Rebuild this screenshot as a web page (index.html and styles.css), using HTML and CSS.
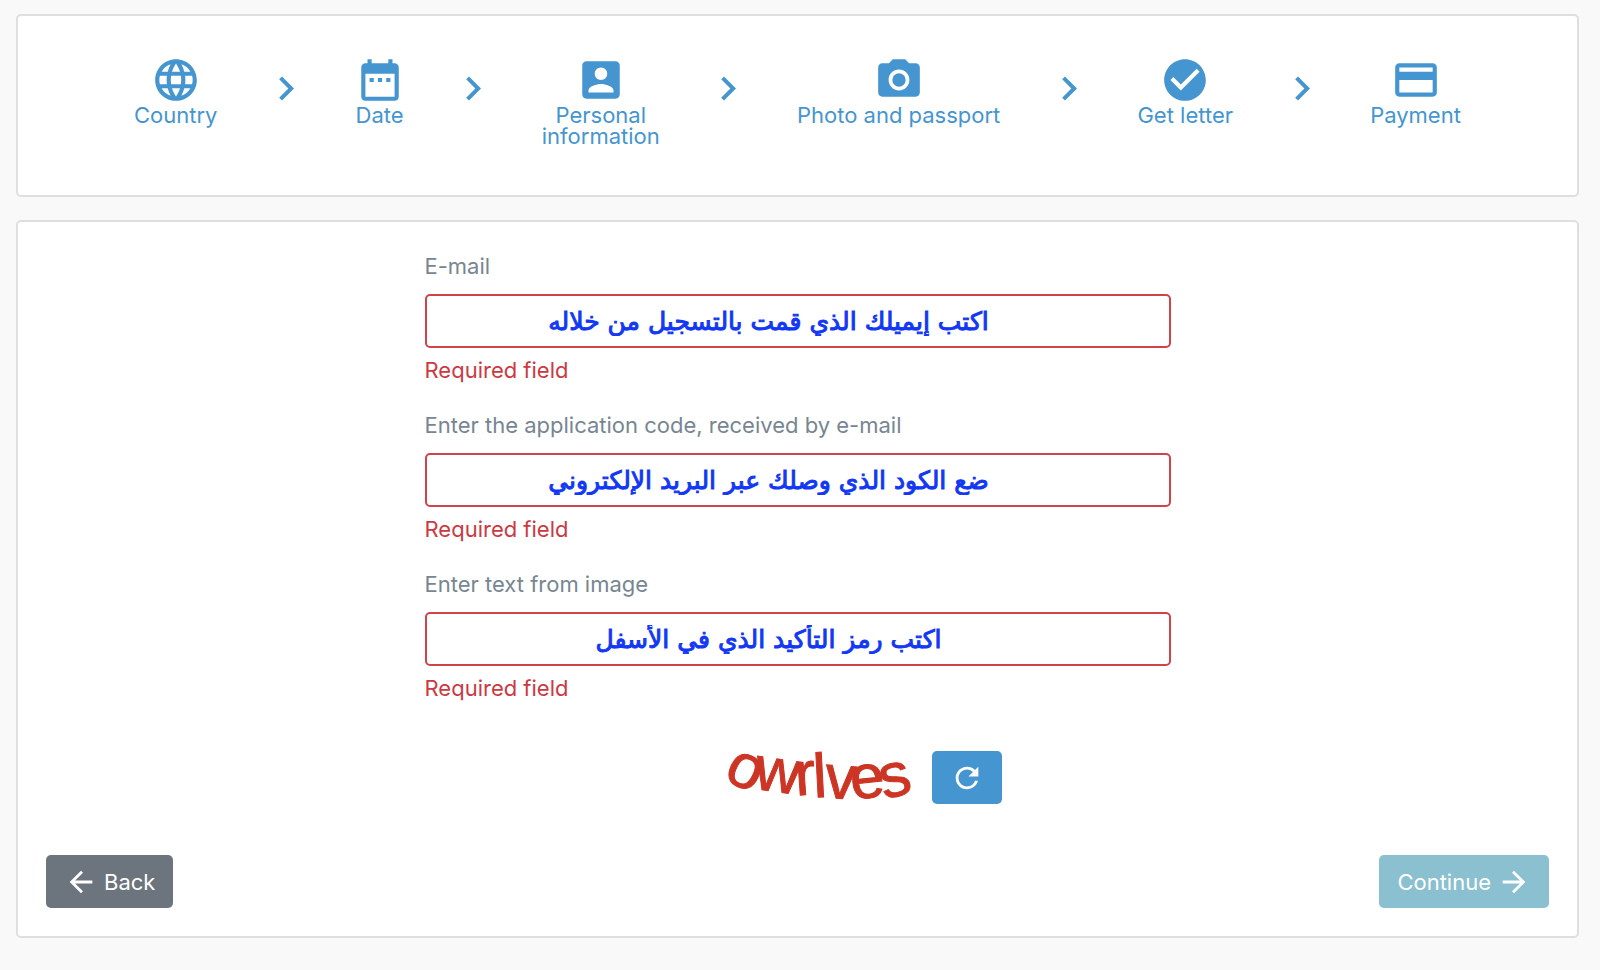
FILE: index.html
```
<!DOCTYPE html>
<html lang="en">
<head>
    <meta charset="utf-8">
    <title>Application</title>
    <link rel="stylesheet" href="styles.css">
</head>
<body>
    <ol class="card steps">
        <li class="step">
            <svg class="step-icon" viewBox="0 0 24 24"><path d="M11.99 2C6.47 2 2 6.48 2 12s4.47 10 9.99 10C17.52 22 22 17.52 22 12S17.52 2 11.99 2zm6.93 6h-2.95a15.65 15.65 0 0 0-1.38-3.56A8.03 8.03 0 0 1 18.92 8zM12 4.04c.83 1.2 1.48 2.53 1.91 3.96h-3.82c.43-1.43 1.08-2.76 1.91-3.96zM4.26 14C4.1 13.36 4 12.69 4 12s.1-1.36.26-2h3.38c-.08.66-.14 1.32-.14 2s.06 1.34.14 2H4.26zm.82 2h2.95c.32 1.25.78 2.45 1.38 3.56A7.99 7.99 0 0 1 5.08 16zm2.95-8H5.08a7.99 7.99 0 0 1 4.33-3.56A15.65 15.65 0 0 0 8.03 8zM12 19.96c-.83-1.2-1.48-2.53-1.91-3.96h3.82c-.43 1.43-1.08 2.76-1.91 3.96zM14.34 14H9.66c-.09-.66-.16-1.32-.16-2s.07-1.35.16-2h4.68c.09.65.16 1.32.16 2s-.07 1.34-.16 2zm.25 5.56c.6-1.11 1.06-2.31 1.38-3.56h2.95a8.03 8.03 0 0 1-4.33 3.56zM16.36 14c.08-.66.14-1.32.14-2s-.06-1.34-.14-2h3.38c.16.64.26 1.31.26 2s-.1 1.36-.26 2h-3.38z"/></svg>
            <span>Country</span>
        </li>
        <li class="chevron"><svg viewBox="8 6 8 12"><path d="M8.59 16.59L13.17 12 8.59 7.41 10 6l6 6-6 6-1.41-1.41z"/></svg></li>
        <li class="step">
            <svg class="step-icon" viewBox="0 0 24 24"><path d="M9 11H7v2h2v-2zm4 0h-2v2h2v-2zm4 0h-2v2h2v-2zm2-7h-1V2h-2v2H8V2H6v2H5c-1.11 0-1.99.9-1.99 2L3 20c0 1.1.89 2 2 2h14c1.1 0 2-.9 2-2V6c0-1.1-.9-2-2-2zm0 16H5V9h14v11z"/></svg>
            <span>Date</span>
        </li>
        <li class="chevron"><svg viewBox="8 6 8 12"><path d="M8.59 16.59L13.17 12 8.59 7.41 10 6l6 6-6 6-1.41-1.41z"/></svg></li>
        <li class="step">
            <svg class="step-icon" viewBox="0 0 24 24"><path d="M3 5v14c0 1.1.89 2 2 2h14c1.1 0 2-.9 2-2V5c0-1.1-.9-2-2-2H5c-1.11 0-2 .9-2 2zm12 4c0 1.66-1.34 3-3 3s-3-1.34-3-3 1.34-3 3-3 3 1.34 3 3zm-9 8c0-2 4-3.1 6-3.1s6 1.1 6 3.1v1H6v-1z"/></svg>
            <span>Personal<br>information</span>
        </li>
        <li class="chevron"><svg viewBox="8 6 8 12"><path d="M8.59 16.59L13.17 12 8.59 7.41 10 6l6 6-6 6-1.41-1.41z"/></svg></li>
        <li class="step">
            <svg class="step-icon" viewBox="0 0 24 24"><circle cx="12" cy="12" r="3.2"/><path d="M9 2L7.17 4H4c-1.1 0-2 .9-2 2v12c0 1.1.9 2 2 2h16c1.1 0 2-.9 2-2V6c0-1.1-.9-2-2-2h-3.17L15 2H9zm3 15c-2.76 0-5-2.24-5-5s2.24-5 5-5 5 2.24 5 5-2.24 5-5 5z"/></svg>
            <span>Photo and passport</span>
        </li>
        <li class="chevron"><svg viewBox="8 6 8 12"><path d="M8.59 16.59L13.17 12 8.59 7.41 10 6l6 6-6 6-1.41-1.41z"/></svg></li>
        <li class="step">
            <svg class="step-icon" viewBox="0 0 24 24"><path d="M12 2C6.48 2 2 6.48 2 12s4.48 10 10 10 10-4.48 10-10S17.52 2 12 2zm-2 15l-5-5 1.41-1.41L10 14.17l7.59-7.59L19 8l-9 9z"/></svg>
            <span>Get letter</span>
        </li>
        <li class="chevron"><svg viewBox="8 6 8 12"><path d="M8.59 16.59L13.17 12 8.59 7.41 10 6l6 6-6 6-1.41-1.41z"/></svg></li>
        <li class="step">
            <svg class="step-icon" viewBox="0 0 24 24"><path d="M20 4H4c-1.11 0-1.99.89-1.99 2L2 18c0 1.11.89 2 2 2h16c1.11 0 2-.89 2-2V6c0-1.11-.89-2-2-2zm0 14H4v-6h16v6zm0-10H4V6h16v2z"/></svg>
            <span>Payment</span>
        </li>
    </ol>

    <form class="card form">
        <div class="fields">
            <div class="field">
                <label for="email">E-mail</label>
                <input type="text" id="email" dir="rtl" value="اكتب إيميلك الذي قمت بالتسجيل من خلاله">
                <p class="error">Required field</p>
            </div>
            <div class="field">
                <label for="code">Enter the application code, received by e-mail</label>
                <input type="text" id="code" dir="rtl" value="ضع الكود الذي وصلك عبر البريد الإلكتروني">
                <p class="error">Required field</p>
            </div>
            <div class="field">
                <label for="captcha">Enter text from image</label>
                <input type="text" id="captcha" dir="rtl" value="اكتب رمز التأكيد الذي في الأسفل">
                <p class="error">Required field</p>
            </div>
            <div class="captcha">
                <svg class="captcha-image" viewBox="0 0 210 52">
                    <text x="10 41 84 102 112 140 172" y="27 37 44 46 46 48 48" rotate="26 8 -4 -3 4 -6 -14">owrlves</text>
                </svg>
                <button type="button" class="btn btn-refresh" aria-label="Refresh image">
                    <svg viewBox="0 0 24 24"><path d="M17.65 6.35A7.958 7.958 0 0 0 12 4c-4.42 0-7.99 3.58-7.99 8s3.57 8 7.99 8c3.73 0 6.84-2.55 7.73-6h-2.08A5.99 5.99 0 0 1 12 18c-3.31 0-6-2.69-6-6s2.69-6 6-6c1.66 0 3.14.69 4.22 1.78L13 11h7V4l-2.35 2.35z"/></svg>
                </button>
            </div>
        </div>

        <div class="actions">
            <button type="button" class="btn btn-back">
                <svg viewBox="0 0 24 24"><path d="M20 11H7.83l5.59-5.59L12 4l-8 8 8 8 1.41-1.41L7.83 13H20v-2z"/></svg>
                Back
            </button>
            <button type="submit" class="btn btn-continue" disabled>
                Continue
                <svg viewBox="0 0 24 24"><path d="M12 4l-1.41 1.41L16.17 11H4v2h12.17l-5.58 5.59L12 20l8-8-8-8z"/></svg>
            </button>
        </div>
    </form>
</body>
</html>
```
FILE: styles.css
```
* {
    box-sizing: border-box;
}

body {
    margin: 0;
    padding: 14px 21px 32px 16px;
    background-color: #f9f9f9;
    font-family: Inter, 'Liberation Sans', sans-serif;
    font-size: 22px;
    line-height: 33px;
}

.card {
    background-color: #ffffff;
    border: 2px solid #dfdfdf;
    border-radius: 5px;
}

/* Steps */
.steps {
    display: flex;
    justify-content: space-between;
    margin: 0 0 23px;
    padding: 39px 116px 48px;
    list-style: none;
    color: #4595d0;
    fill: #4595d0;
    line-height: 21px;
}

.step {
    display: flex;
    flex-direction: column;
    align-items: center;
    text-align: center;
}

.step-icon {
    width: 50px;
    height: 50px;
}

.chevron svg {
    display: block;
    width: 16px;
    height: 25px;
    margin-top: 21px;
}

/* Form */
.form {
    padding: 28px;
}

.fields {
    max-width: 746px;
    margin: 0 auto;
}

.field {
    margin-bottom: 22px;
}

label {
    display: block;
    margin-bottom: 11px;
    color: #788592;
}

input[type="text"] {
    display: block;
    width: 100%;
    height: 54px;
    padding: 0 74px 0 16px;
    border: 2px solid #d0434b;
    border-radius: 5px;
    background-color: #ffffff;
    color: #1238f5;
    font-family: 'DejaVu Sans', sans-serif;
    font-size: 25px;
    text-align: center;
    -webkit-text-stroke: 1px #1238f5;
}

.error {
    margin: 6px 0 0;
    color: #cb3a43;
}

.captcha {
    display: flex;
    justify-content: center;
    gap: 10px;
    margin-top: 46px;
    padding-left: 118px;
}

.captcha-image {
    width: 210px;
    height: 53px;
    overflow: visible;
    fill: #cc3524;
    stroke: #cc3524;
    font-family: 'Liberation Sans', sans-serif;
    font-size: 62px;
}

/* Buttons */
.btn {
    display: flex;
    align-items: center;
    gap: 6px;
    height: 53px;
    padding: 0 18px;
    border: none;
    border-radius: 5px;
    color: #ffffff;
    font-family: inherit;
    font-size: 22px;
    cursor: pointer;
}

.btn svg {
    width: 34px;
    height: 34px;
    fill: #ffffff;
}

.btn-refresh {
    background-color: #4595d0;
}

.btn-back {
    background-color: #6c757d;
}

.btn-continue {
    background-color: #8ac0cf;
    cursor: default;
}

.actions {
    display: flex;
    justify-content: space-between;
    margin-top: 51px;
}
```
